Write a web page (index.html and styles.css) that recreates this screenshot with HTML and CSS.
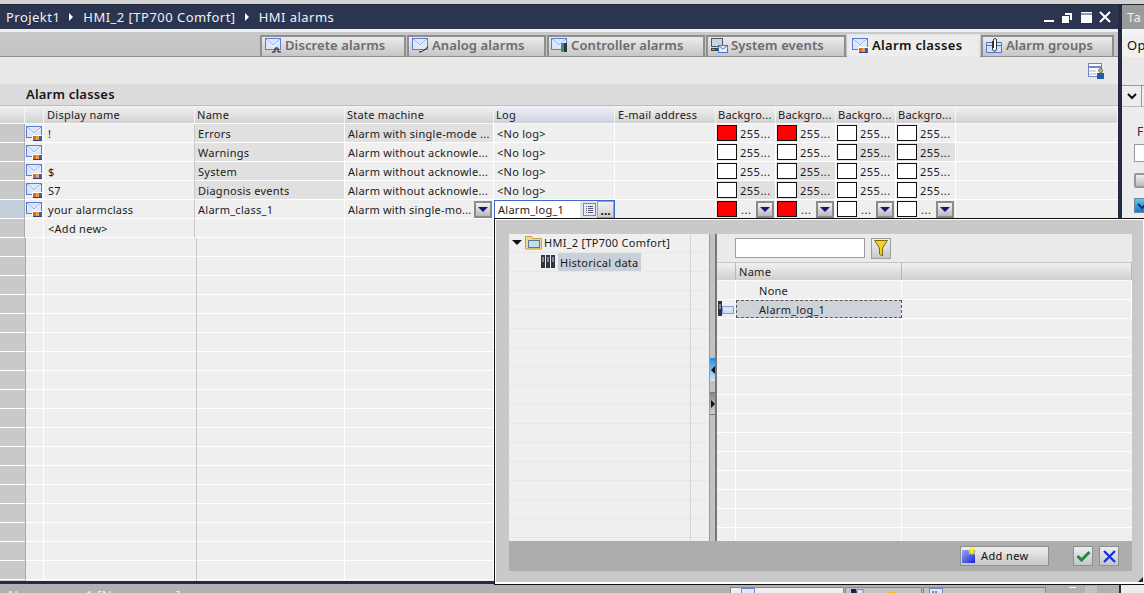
FILE: index.html
```html
<!DOCTYPE html>
<html lang="en">
<head>
<meta charset="utf-8">
<title>HMI alarms</title>
<link rel="stylesheet" href="styles.css">
</head>
<body>
<svg class="defs" width="0" height="0" aria-hidden="true">
  <symbol id="env" viewBox="0 0 17 15">
    <rect x="0.5" y="0.5" width="15" height="11" fill="#dbe7fb" stroke="#5a7cd8"/>
    <path d="M1 1l7 6 7-6" fill="none" stroke="#8aa6e4"/>
    <path d="M1 2l7 6 7-6" fill="none" stroke="#f6f9ff"/>
  </symbol>
  <symbol id="mail" viewBox="0 0 17 15">
    <use href="#env"/>
    <rect x="6" y="9" width="11" height="6" fill="#fff"/>
    <rect x="7" y="14" width="9" height="1" fill="#2a3f90"/>
    <rect x="7" y="10" width="3" height="4" fill="#e86030"/>
    <rect x="10" y="10" width="3" height="4" fill="#f0a030"/>
    <rect x="13" y="10" width="3" height="4" fill="#3060d0"/>
  </symbol>
</svg>
<div class="app">
  <div class="strip"></div>
  <div class="main">
    <section class="editor">
      <header class="title">
        <span>Projekt1</span><i class="caret"></i><span>HMI_2 [TP700 Comfort]</span><i class="caret"></i><span>HMI alarms</span>
        <span class="win">
          <svg width="70" height="14" viewBox="0 0 70 14"><path d="M0 10h10v2H0z" fill="#fff"/><path d="M21 3h7v7h-2V5h-5zM18 6h7v7h-7z" fill="#fff"/><path d="M37 2h11v11H37z" fill="#fff"/><path d="M37 4h11" stroke="#2b3550"/><path d="M56 2l10 10M66 2L56 12" stroke="#fff" stroke-width="2" fill="none"/></svg>
        </span>
      </header>
      <div class="gap"></div>
      <nav class="tabs">
        <a class="tab tab-discrete"><svg class="ic" width="17" height="15"><use href="#env"/><path d="M7 14h3v-4h3v4h3" fill="none" stroke="#111"/></svg>Discrete alarms</a>
        <a class="tab tab-analog"><svg class="ic" width="17" height="15"><use href="#env"/><path d="M7 14c3 0 4-1 9-5" fill="none" stroke="#111"/></svg>Analog alarms</a>
        <a class="tab tab-ctrl"><svg class="ic" width="17" height="15"><use href="#env"/><rect x="10" y="5" width="3" height="9" fill="#3a8a94"/><rect x="13" y="5" width="3" height="9" fill="#333"/></svg>Controller alarms</a>
        <a class="tab tab-sys"><svg class="ic" width="17" height="15" viewBox="0 0 17 15"><rect x="0.5" y="0.5" width="11" height="8" fill="#c6d4ea" stroke="#555"/><rect x="0" y="10" width="10" height="3" fill="#444"/><rect x="1" y="11" width="3" height="1" fill="#5c5"/><rect x="7.5" y="7.5" width="9" height="7" fill="#e4eefb" stroke="#4f73d6"/><path d="M8 8l4 3 4-3" fill="none" stroke="#4f73d6"/></svg>System events</a>
        <a class="tab tab-class on"><svg class="ic" width="17" height="15"><use href="#mail"/></svg>Alarm classes</a>
        <a class="tab tab-group"><svg class="ic" width="17" height="15" viewBox="0 0 17 15"><path d="M0.500 4.500h15v10h-15z" fill="#d6e2f8" stroke="#4f73d6"/><path d="M0.500 7.500h15" stroke="#4f73d6"/><path d="M6.500 3v8a2 2 0 0 0 4 0V2a1.500 1.500 0 0 0-3 0v8" fill="#fff" stroke="#333"/></svg>Alarm groups</a>
      </nav>
      <div class="toolbar">
        <svg width="16" height="16" viewBox="0 0 16 16"><rect x="0.500" y="0.500" width="13" height="13" fill="#fff" stroke="#6f86c8"/><path d="M1 4h12" stroke="#6f86c8" stroke-width="2"/><path d="M1 8h7M1 11h7" stroke="#9fb0de"/><rect x="9" y="10" width="7" height="6" fill="#1f5fa8"/><circle cx="12.500" cy="7.500" r="2" fill="#e8b070" stroke="#333" stroke-width=".6"/></svg>
      </div>
      <h2 class="section">Alarm classes</h2>
      <div class="row head">
        <div class="c"></div><div class="c"></div><div class="c">Display name</div><div class="c">Name</div><div class="c">State machine</div><div class="c sel">Log</div><div class="c">E-mail address</div><div class="c">Backgro...</div><div class="c">Backgro...</div><div class="c">Backgro...</div><div class="c">Backgro...</div><div class="c last"></div>
      </div>
      <div class="row">
        <div class="c rh"></div><div class="c ico"><svg width="17" height="15"><use href="#mail"/></svg></div><div class="c dn">!</div><div class="c alt">Errors</div><div class="c alt">Alarm with single-mode ...</div><div class="c log">&lt;No log&gt;</div><div class="c"></div>
        <div class="c col"><b class="sw red"></b><span>255...</span></div><div class="c col"><b class="sw red"></b><span>255...</span></div><div class="c col"><b class="sw"></b><span>255...</span></div><div class="c col"><b class="sw"></b><span>255...</span></div><div class="c last"></div>
      </div>
      <div class="row">
        <div class="c rh"></div><div class="c ico"><svg width="17" height="15"><use href="#mail"/></svg></div><div class="c dn"></div><div class="c alt">Warnings</div><div class="c">Alarm without acknowle...</div><div class="c log">&lt;No log&gt;</div><div class="c"></div>
        <div class="c col"><b class="sw"></b><span>255...</span></div><div class="c col"><b class="sw"></b><span>255...</span></div><div class="c col alt"><b class="sw"></b><span>255...</span></div><div class="c col alt"><b class="sw"></b><span>255...</span></div><div class="c last"></div>
      </div>
      <div class="row">
        <div class="c rh"></div><div class="c ico"><svg width="17" height="15"><use href="#mail"/></svg></div><div class="c dn">$</div><div class="c alt">System</div><div class="c">Alarm without acknowle...</div><div class="c log">&lt;No log&gt;</div><div class="c"></div>
        <div class="c col"><b class="sw"></b><span>255...</span></div><div class="c col alt"><b class="sw"></b><span>255...</span></div><div class="c col"><b class="sw"></b><span>255...</span></div><div class="c col"><b class="sw"></b><span>255...</span></div><div class="c last"></div>
      </div>
      <div class="row">
        <div class="c rh"></div><div class="c ico"><svg width="17" height="15"><use href="#mail"/></svg></div><div class="c dn">S7</div><div class="c alt">Diagnosis events</div><div class="c">Alarm without acknowle...</div><div class="c log">&lt;No log&gt;</div><div class="c"></div>
        <div class="c col alt"><b class="sw"></b><span>255...</span></div><div class="c col alt"><b class="sw"></b><span>255...</span></div><div class="c col"><b class="sw"></b><span>255...</span></div><div class="c col"><b class="sw"></b><span>255...</span></div><div class="c last"></div>
      </div>
      <div class="row active">
        <div class="c rh"></div><div class="c ico"><svg width="17" height="15"><use href="#mail"/></svg></div><div class="c dn">your alarmclass</div><div class="c">Alarm_class_1</div>
        <div class="c drop"><span class="st">Alarm with single-mo...</span><button class="dd"></button></div>
        <div class="c edit"><span class="val">Alarm_log_1</span><svg class="lst" width="13" height="13" viewBox="0 0 13 13"><rect x="0.500" y="0.500" width="12" height="12" fill="#e6ecfa" stroke="#6f86c8"/><path d="M3 3.500h1M3 5.500h1M3 7.500h1M3 9.500h1M5 3.500h5M5 5.500h5M5 7.500h5M5 9.500h5" stroke="#2a3050" stroke-width=".8"/></svg><button class="more">...</button></div>
        <div class="c"></div>
        <div class="c col drop"><b class="sw red"></b><span class="dots">...</span><button class="dd"></button></div><div class="c col drop"><b class="sw red"></b><span class="dots">...</span><button class="dd"></button></div><div class="c col drop"><b class="sw"></b><span class="dots">...</span><button class="dd"></button></div><div class="c col drop"><b class="sw"></b><span class="dots">...</span><button class="dd"></button></div><div class="c last"></div>
      </div>
      <div class="row">
        <div class="c rh"></div><div class="c ico"></div><div class="c dn">&lt;Add new&gt;</div><div class="c"></div><div class="c"></div><div class="c"></div><div class="c"></div><div class="c"></div><div class="c"></div><div class="c"></div><div class="c"></div><div class="c last"></div>
      </div>
      <div class="empties"></div>
    </section>
    <aside class="tasks">
      <div class="t-head">Ta</div>
      <div class="t-gap"></div>
      <div class="t-op">Op</div>
      <div class="t-space"></div>
      <div class="t-chev"><svg width="10" height="7" viewBox="0 0 10 7"><path d="M1 1l4 4 4-4" fill="none" stroke="#111" stroke-width="2"/></svg></div>
      <div class="t-f">F</div>
      <div class="t-input"></div>
      <div class="t-btn"></div>
      <div class="t-check"><svg width="12" height="10" viewBox="0 0 12 10"><path d="M2 3l4 4 4-4" fill="none" stroke="#10357a" stroke-width="2"/></svg></div>
    </aside>
  </div>
  <footer class="foot">
    <span class="foot-text">Namespace 1 [Namespace]</span>
    <span class="ft ft-a"><svg width="14" height="10"><rect x="0.500" y="0.500" width="13" height="10" fill="#dfe7f8" stroke="#6f86c8"/></svg></span>
    <span class="ft ft-b"><svg width="46" height="10" viewBox="0 0 46 10"><path d="M2 1h5v2h2v8H2z" fill="#223"/><rect x="8" y="1.500" width="6" height="9" fill="#dfe7f8" stroke="#6f86c8"/><rect x="38" y="4" width="8" height="6" fill="#f0c020"/></svg></span>
    <span class="ft ft-c"><svg width="14" height="10"><rect x="0.500" y="0.500" width="13" height="10" fill="#dfe7f8" stroke="#6f86c8"/><path d="M4 3v5M7 3v5" stroke="#223"/></svg></span>
    <span class="foot-win"><svg width="28" height="7" viewBox="0 0 28 7"><path d="M0 1h7v1H0z" fill="#fff"/><rect x="16" y="0" width="12" height="7" fill="#c2c2c2"/></svg></span>
    <span class="foot-right"></span>
  </footer>

  <div class="popup">
    <div class="pop-body">
      <div class="tree">
        <div class="tree-row"><i class="open"></i>
          <svg width="18" height="15" viewBox="0 0 18 15"><path d="M0.500 14V1.500h6l1 2h9V14z" fill="#f2d890" stroke="#c8a040"/><rect x="3.500" y="5.500" width="11" height="7" fill="#bfe0e8" stroke="#5a7a90"/></svg>
          <span class="t0">HMI_2 [TP700 Comfort]</span></div>
        <div class="tree-row lvl"><svg width="15" height="15" viewBox="0 0 15 15"><path d="M0 1h4v13H0zM5 1h4v13H5zM10 1h4v13h-4z" fill="#2e3440"/><path d="M2 3v5M7 3v5M12 3v5" stroke="#dde"/></svg><span class="sel-t">Historical data</span></div>
        <div class="tree-row"></div><div class="tree-row"></div><div class="tree-row"></div><div class="tree-row"></div><div class="tree-row"></div><div class="tree-row"></div><div class="tree-row"></div><div class="tree-row"></div><div class="tree-row"></div><div class="tree-row"></div><div class="tree-row"></div><div class="tree-row"></div><div class="tree-row"></div><div class="tree-row"></div>
      </div>
      <div class="split">
        <i class="arrow blue"><b class="tl"></b></i>
        <i class="arrow grey"><b class="tr"></b></i>
      </div>
      <div class="list">
        <div class="filter">
          <span class="f-in"></span>
          <button class="f-btn"><svg width="14" height="17" viewBox="0 0 14 17"><path d="M0.500 0.500h13L8.500 8v8L5.500 14V8z" fill="#f4d020" stroke="#7a6a20"/></svg></button>
        </div>
        <div class="lrow lhead"><div class="l"></div><div class="l">Name</div><div class="l"></div></div>
        <div class="lrow"><div class="l"></div><div class="l ind">None</div><div class="l"></div></div>
        <div class="lrow"><div class="l lic"><svg width="17" height="16" viewBox="0 0 17 16"><path d="M1 0h4v15H1z" fill="#2e3440"/><path d="M3 3v5" stroke="#dde"/><rect x="5.500" y="5.500" width="11" height="7" fill="#cfdff5" stroke="#7f9ce0"/><path d="M6 6l5 3.500L16 6" fill="none" stroke="#f4f8ff"/></svg></div><div class="l ind focus">Alarm_log_1</div><div class="l"></div></div>
        <div class="lrow"></div><div class="lrow"></div><div class="lrow"></div><div class="lrow"></div><div class="lrow"></div><div class="lrow"></div><div class="lrow"></div><div class="lrow"></div><div class="lrow"></div><div class="lrow"></div><div class="lrow"></div>
      </div>
    </div>
    <div class="pop-bar">
      <button class="add"><svg width="15" height="17" viewBox="0 0 15 17"><defs><linearGradient id="bl" x1="0" y1="0" x2="1" y2="1"><stop offset="0" stop-color="#9aa8f0"/><stop offset="1" stop-color="#1a22d8"/></linearGradient></defs><rect x="0" y="3" width="13" height="13" fill="url(#bl)"/><path d="M10 0v8M6 4h8M7 1l6 6M13 1L7 7" stroke="#ffee20" stroke-width="1.200"/></svg><span>Add new</span></button>
      <button class="sq ok"><svg width="15" height="12" viewBox="0 0 15 12"><path d="M1.500 6l4 4 8-8" fill="none" stroke="#1f8a3a" stroke-width="3"/></svg></button>
      <button class="sq no"><svg width="13" height="13" viewBox="0 0 13 13"><path d="M1 1l11 11M12 1L1 12" fill="none" stroke="#1830e0" stroke-width="2.400"/></svg></button>
    </div>
    <i class="grip"></i>
  </div>
</div>
</body>
</html>
```
FILE: styles.css
```css
* { box-sizing: border-box; }
html, body { margin: 0; height: 100%; overflow: hidden; background: #e8e8e8; }
body { font: 11px/1 "Noto Sans", "DejaVu Sans", sans-serif; letter-spacing: .27px; color: #1b1b22; }
.defs { position: absolute; }
.app { position: relative; width: 1144px; height: 593px; display: flex; flex-direction: column; overflow: hidden; }
.strip { flex: none; background: #d2d2d2; border-bottom: 1px solid #222b3c; height: 5px; }
.main { flex: 1; display: flex; min-height: 0; }

.editor { width: 1118px; flex: none; display: flex; flex-direction: column; background: #efefef; border-bottom: 3px solid #232b42; }
.title { height: 24px; flex: none; display: flex; align-items: center; background: #2b3550; color: #eef1f6; font-size: 13px; padding-left: 6px; letter-spacing: .47px; }
.caret { width: 0; height: 0; border-left: 4px solid #fff; border-top: 4px solid transparent; border-bottom: 4px solid transparent; margin: 0 10px 0 9px; }
.win { margin-left: auto; padding-right: 4px; height: 14px; }
.gap { height: 3px; flex: none; background: #f0f0f0; }
.tabs { height: 25px; flex: none; display: flex; justify-content: flex-end; align-items: flex-end; gap: 1px; padding-right: 4px; background: linear-gradient(#c9c9c9, #c3c3c3); border-bottom: 1px solid #8e8e8e; }
.tab { height: 22px; margin-bottom: -1px; display: flex; align-items: center; padding: 0 0 2px 3px; border: 2px solid #8e8e8e; border-bottom-width: 1px; background: linear-gradient(#ececec, #c6c6c6); color: #686b70; font-size: 13px; font-weight: 600; letter-spacing: .1px; }
.tab .ic { margin-right: 3px; flex: none; }
.tab-discrete { width: 146px; }
.tab-analog { width: 139px; }
.tab-ctrl { width: 158px; padding-left: 2px; }
.tab-sys { width: 140px; }
.tab-class { width: 133px; }
.tab-group { width: 133px; }
.tab.on { color: #111; background: #ededed; border-color: #e8e8e8; border-bottom: 1px solid #e8e8e8; height: 23px; letter-spacing: .33px; }
.toolbar { height: 27px; flex: none; background: #e8e8e8; display: flex; justify-content: flex-end; align-items: center; padding: 0 14px 0 0; }
.section { margin: 0; height: 21px; flex: none; background: #dcdcdc; font-size: 13px; font-weight: 600; padding: 3px 0 0 26px; line-height: 14px; letter-spacing: .2px; color: #15151c; }

.row { display: grid; grid-template-columns: 25px 19px 151px 150px 149px 121px 101px 60px 60px 60px 60px 162px; height: 19px; flex: none; }
.c { border-right: 1px solid #fff; border-bottom: 1px solid #fff; display: flex; align-items: center; padding-left: 3px; white-space: nowrap; overflow: hidden; min-width: 0; }
.dn { border-right-color: #c9c9c9; padding-left: 4px; }
.log { padding-left: 3px; }
.last { border-right: 0; }
.head { border-top: 1px solid #bdbdbd; }
.head .c { background: linear-gradient(#f2f2f2, #d2d2d2); border-right: 1px solid #f4f4f4; border-bottom: 1px solid #fafafa; }
.head .c:nth-child(n+4) { padding-left: 2px; }
.head .c:nth-child(7) { padding-left: 3px; }
.head .sel { background: linear-gradient(#eef2f8, #ccd3dd); }
.rh { background: #c9c9c9; border-right: 1px solid #a9a9a9; }
.ico { padding-left: 1px; background: #f0f0f0; }
.alt, .c.alt { background: #e0e0e0; }
.col { padding-left: 1px; gap: 3px; }
.col > span { flex: 1; display: flex; align-items: center; letter-spacing: .5px; }
.sw { width: 20px; height: 16px; flex: none; background: #fff; border: 1px solid #111; }
.sw.red { background: #fe0000; }
.active .rh { background: #c3d0dc; }
.st { flex: none; letter-spacing: .2px; }
.dots { letter-spacing: 0; padding-left: 1px; }
.dd { width: 18px; height: 17px; flex: none; margin-left: auto; margin-right: 1px; padding: 0; border: 2px solid #8b8b8b; background: linear-gradient(#f4f4f4, #b9b9b9); display: flex; align-items: center; justify-content: center; }
.dd::after { content: ""; border-top: 5px solid #15157a; border-left: 5px solid transparent; border-right: 5px solid transparent; }
.edit { padding: 0; background: #e4e4e4; border: 1px solid #3f66c4; align-items: stretch; gap: 0; }
.val { width: 86px; background: #fff; display: flex; align-items: center; padding-left: 3px; }
.lst { align-self: center; margin: 0 1px 0 3px; flex: none; }
.more { width: 17px; border: 1px solid #a2a2a2; background: linear-gradient(#f0f0f0, #cfcfcf); padding: 0 0 3px; font: bold 12px "Noto Sans", sans-serif; color: #111; }
.empties { flex: 1; background: linear-gradient(#fff, #fff) 344px 0/1px 100% no-repeat, linear-gradient(#fff, #fff) 493px 0/1px 100% no-repeat, repeating-linear-gradient(#efefef 0, #efefef 18px, #fff 18px, #fff 19px); position: relative; }
.empties::before { content: ""; position: absolute; inset: 0 auto 0 0; width: 25px; background: repeating-linear-gradient(#c9c9c9 0, #c9c9c9 18px, #fff 18px, #fff 19px); border-right: 1px solid #a9a9a9; }
.empties::after { content: ""; position: absolute; inset: 0 auto 0 43px; width: 152px; border-left: 1px solid #fff; border-right: 1px solid #c9c9c9; }

.tasks { flex: 1; background: #ededed; border-left: 4px solid #232b42; color: #111; display: flex; flex-direction: column; align-items: flex-start; overflow: hidden; }
.t-head { width: 100%; height: 24px; background: #9a9a9a; color: #f0f0f0; font-size: 13px; padding: 6px 0 0 5px; }
.t-gap { height: 6px; width: 100%; background: #f4f4f4; }
.t-op { width: 100%; height: 22px; font-size: 13px; padding: 4px 0 0 5px; background: #f0f0f0; }
.t-space { height: 29px; width: 100%; border-bottom: 1px solid #999; background: #e9e9e9; }
.t-chev { width: 100%; height: 21px; border-bottom: 1px solid #bbb; padding: 7px 0 0 5px; line-height: 0; background: linear-gradient(#999, #999) 19px 0/1px 100% no-repeat; }
.t-f { margin: 19px 0 0 15px; height: 13px; font-size: 12px; color: #402040; }
.t-input { margin: 5px 0 0 12px; width: 20px; height: 18px; background: #fff; border: 1px solid #999; flex: none; }
.t-btn { margin: 11px 0 0 12px; width: 20px; height: 15px; border: 2px solid #999; border-radius: 2px; background: linear-gradient(#eee, #bbb); flex: none; }
.t-check { margin: 10px 0 0 12px; width: 14px; height: 15px; background: linear-gradient(#5cc8f0, #1a78c8); border: 1px solid #6a8aa0; line-height: 0; padding: 2px 0 0 1px; flex: none; }

.foot { height: 9px; flex: none; background: #b1b1b1; position: relative; overflow: hidden; }
.foot-text { position: absolute; left: 8px; top: 5px; color: #f2f2f2; font-size: 13px; }
.ft { position: absolute; top: 3px; height: 10px; border: 1px solid #888; padding-left: 10px; line-height: 0; }
.ft-a { left: 730px; width: 114px; background: #eeeeee; }
.ft-b { left: 845px; width: 77px; padding-left: 3px; background: #c4c4c4; }
.ft-c { left: 923px; width: 123px; padding-left: 5px; background: #c4c4c4; }
.foot-win { position: absolute; left: 1069px; top: 2px; line-height: 0; }
.foot-right { position: absolute; left: 1119px; top: 0; bottom: 0; right: 0; background: #ededed; border-left: 2px solid #232b42; }

.popup { position: absolute; left: 494px; top: 218px; right: 0; height: 367px; background: #c9c9c9; border: 1px solid #111; border-right: 0; box-shadow: inset 1px 1px 0 #fff, inset 0 -2px 0 #fff, inset -1px 0 0 #fff; padding: 15px 12px 12px 14px; display: flex; flex-direction: column; }
.pop-body { height: 307px; flex: none; display: flex; background: #efefef; overflow: hidden; }
.tree { width: 200px; flex: none; position: relative; background: #efefef; }
.tree::after { content: ""; position: absolute; left: 181px; top: 0; bottom: 0; border-left: 1px solid #d4d4d4; }
.tree-row { height: 19px; display: flex; align-items: center; border-bottom: 1px solid #e7e7e7; gap: 2px; padding: 0 0 1px 3px; }
.t0 { margin-left: -1px; }
.open { width: 0; height: 0; border-top: 5px solid #111; border-left: 5px solid transparent; border-right: 5px solid transparent; margin-right: 1px; }
.lvl { padding-left: 32px; gap: 2px; }
.sel-t { background: #c8d0da; height: 18px; display: flex; align-items: center; padding: 0 2px; margin: 1px 0 0 0; }
.split { width: 8px; flex: none; background: #c2c2c2; border-left: 1px solid #999; border-right: 2px solid #777; position: relative; display: flex; flex-direction: column; padding-top: 124px; }
.arrow { display: flex; align-items: center; width: 100%; height: 23px; flex: none; }
.arrow.blue { background: linear-gradient(#1f8ee0, #cfe8fb); }
.arrow.grey { background: linear-gradient(#8a8a8a, #cfcfcf); margin-top: 11px; border-top: 1px solid #777; border-bottom: 1px solid #777; }
.tl { width: 0; border-right: 4px solid #111; border-top: 4px solid transparent; border-bottom: 4px solid transparent; margin-left: 1px; }
.tr { width: 0; border-left: 4px solid #111; border-top: 4px solid transparent; border-bottom: 4px solid transparent; margin-left: 1px; }
.list { flex: 1; min-width: 0; background: linear-gradient(#fff, #fff) 18px 0/1px 100% no-repeat, linear-gradient(#fff, #fff) 184px 0/1px 100% no-repeat, #efefef; }
.filter { height: 28px; background: #ebebeb; display: flex; align-items: center; padding-left: 18px; gap: 6px; }
.f-in { width: 130px; height: 20px; background: #fff; border: 1px solid #9c9c9c; }
.f-btn { width: 20px; height: 21px; padding: 0; border: 1px solid #9c9c9c; background: linear-gradient(#f0f0f0, #c8c8c8); display: flex; align-items: center; justify-content: center; }
.lrow { height: 19px; display: grid; grid-template-columns: 19px 166px 1fr; border-bottom: 1px solid #fff; }
.l { display: flex; align-items: center; padding-left: 3px; border-right: 1px solid #fff; min-width: 0; }
.lhead { border-top: 1px solid #c4c4c4; border-bottom: 1px solid #fafafa; }
.lhead .l { background: linear-gradient(#f0f0f0, #d0d0d0); border-right-color: #b8b8b8; }
.ind { padding-left: 23px; }
.lic { padding-left: 0; overflow: hidden; }
.focus { background: #ced3d9; outline: 1px dashed #555; outline-offset: -1px; }
.pop-bar { height: 30px; flex: none; background: #adadad; display: flex; align-items: center; padding-right: 13px; justify-content: flex-end; }
.add { width: 89px; height: 20px; padding: 0 0 1px 1px; margin-right: 24px; border: 1px solid #909090; background: linear-gradient(#f0f0f0, #c6c6c6); display: flex; align-items: center; font: 11px "Noto Sans", sans-serif; letter-spacing: .4px; color: #111; gap: 4px; }
.sq { width: 20px; height: 20px; padding: 0; border: 1px solid #8f8f8f; background: linear-gradient(#eee, #c6c6c6); display: flex; align-items: center; justify-content: center; }
.no { margin-left: 6px; }
.grip { position: absolute; right: 1px; bottom: 2px; width: 0; height: 0; border-bottom: 5px solid #222; border-left: 5px solid transparent; }
```
